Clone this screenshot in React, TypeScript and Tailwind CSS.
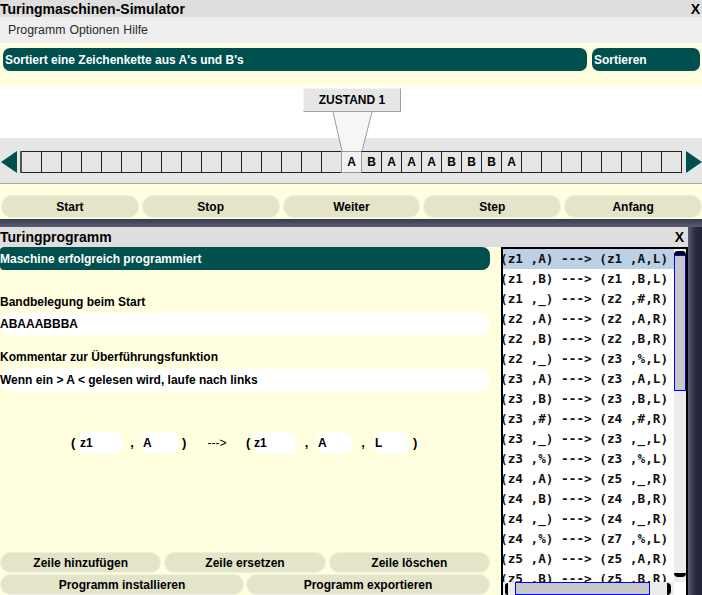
import React from "react";

const rows = [
  "(z1 ,A) ---> (z1 ,A,L)",
  "(z1 ,B) ---> (z1 ,B,L)",
  "(z1 ,_) ---> (z2 ,#,R)",
  "(z2 ,A) ---> (z2 ,A,R)",
  "(z2 ,B) ---> (z2 ,B,R)",
  "(z2 ,_) ---> (z3 ,%,L)",
  "(z3 ,A) ---> (z3 ,A,L)",
  "(z3 ,B) ---> (z3 ,B,L)",
  "(z3 ,#) ---> (z4 ,#,R)",
  "(z3 ,_) ---> (z3 ,_,L)",
  "(z3 ,%) ---> (z3 ,%,L)",
  "(z4 ,A) ---> (z5 ,_,R)",
  "(z4 ,B) ---> (z4 ,B,R)",
  "(z4 ,_) ---> (z4 ,_,R)",
  "(z4 ,%) ---> (z7 ,%,L)",
  "(z5 ,A) ---> (z5 ,A,R)",
  "(z5 ,B) ---> (z5 ,B,R)",
];

const tape: string[] = [
  ...Array(16).fill(""),
  "A", "B", "A", "A", "A", "B", "B", "B", "A",
  ...Array(8).fill(""),
];

function Btn({ children }: { children: React.ReactNode }) {
  return (
    <div className="h-full bg-[#e4e4c9] border border-[#efefdf] rounded-[11px] flex items-center justify-center text-[12px] font-bold text-black">
      {children}
    </div>
  );
}

function Field({ w, value }: { w: string; value: string }) {
  return (
    <div className={`${w} h-[22px] bg-white rounded-[10px] flex items-center pl-[2px] text-[12px] font-bold`}>
      {value}
    </div>
  );
}

export default function App() {
  return (
    <div className="relative w-[702px] h-[595px] overflow-hidden bg-white font-['Liberation_Sans',Arial,sans-serif] text-black flex flex-col">
      {/* title bar */}
      <div className="h-[17px] shrink-0 bg-[#dedede] flex items-center justify-between pr-[2px]">
        <span className="text-[14px] font-bold leading-none">Turingmaschinen-Simulator</span>
        <span className="text-[14px] font-bold leading-none">X</span>
      </div>
      {/* menu */}
      <div className="h-[26px] shrink-0 bg-[#eeeeee] flex items-center pl-[8px] text-[12.3px] text-[#2a2a2a] gap-[4px]">
        <span>Programm</span>
        <span>Optionen</span>
        <span>Hilfe</span>
      </div>
      {/* program name */}
      <div className="h-[43px] shrink-0 bg-[#ffffe0] flex gap-[5px] pt-[5px] pl-[3px] pr-[2px]">
        <div className="flex-1 h-[23px] bg-[#005050] rounded-[7px] text-white font-bold text-[12px] flex items-center pl-[2px]">
          Sortiert eine Zeichenkette aus A's und B's
        </div>
        <div className="w-[108px] h-[23px] bg-[#005050] rounded-[7px] text-white font-bold text-[12px] flex items-center pl-[2px]">
          Sortieren
        </div>
      </div>
      {/* state */}
      <div className="h-[52px] shrink-0 bg-white pt-[2px] pl-[303px]">
        <div className="w-[98px] h-[24px] bg-[#e6e6e6] border border-[#f4f4f4] border-r-[#a0a0a0] border-b-[#a0a0a0] flex items-center justify-center text-[12px] font-bold">
          ZUSTAND 1
        </div>
      </div>
      {/* tape */}
      <div className="h-[46px] shrink-0 bg-[#e6e6e6] border-b border-[#a8a8a8] flex items-start pt-[13px] pl-[1px]">
        <svg width="17" height="22" viewBox="0 0 17 22" className="shrink-0">
          <polygon points="16,0 16,22 0,11" fill="#005050" />
        </svg>
        <div className="ml-[2px] flex border-r border-[#222] border-l-2 border-l-[#555]">
          {tape.map((c, i) => (
            <div
              key={i}
              className={
                i === 16
                  ? "w-[20px] h-[22px] border-y border-y-[#9a9a9a] border-l border-l-[#9a9a9a] bg-[#f2f2f2] flex items-center justify-center text-[12px] font-bold"
                  : i === 17
                  ? "w-[20px] h-[22px] border-y border-[#222] border-l border-l-[#9a9a9a] flex items-center justify-center text-[12px] font-bold"
                  : i === 0
                  ? "w-[19px] h-[22px] border-y border-[#222] flex items-center justify-center text-[12px] font-bold"
                  : "w-[20px] h-[22px] border-y border-l border-[#222] flex items-center justify-center text-[12px] font-bold"
              }
            >
              {c}
            </div>
          ))}
        </div>
        <svg width="16" height="22" viewBox="0 0 16 22" className="shrink-0 ml-[4px]">
          <polygon points="0,0 0,22 16,11" fill="#005050" />
        </svg>
      </div>
      {/* pointer from state box to head */}
      <svg className="absolute left-[330px] top-[112px]" width="46" height="41" viewBox="0 0 46 41">
        <polygon points="3,0 42,0 32,39 12,39" fill="#f6f6f6" />
        <line x1="3" y1="0" x2="12" y2="39" stroke="#9a9a9a" strokeWidth="1" />
        <line x1="42" y1="0" x2="32" y2="39" stroke="#9a9a9a" strokeWidth="1" />
      </svg>
      {/* control buttons */}
      <div className="h-[35px] shrink-0 bg-[#ffffe0] pt-[11px] pl-[1px]">
        <div className="h-[23px] grid grid-cols-5 gap-[3px]">
          <Btn>Start</Btn>
          <Btn>Stop</Btn>
          <Btn>Weiter</Btn>
          <Btn>Step</Btn>
          <Btn>Anfang</Btn>
        </div>
      </div>
      {/* dark band */}
      <div className="h-[8px] shrink-0 bg-gradient-to-b from-[#3a3a52] to-[#5c5c72]" />
      {/* lower window */}
      <div className="flex-1 flex min-h-0">
        <div className="w-[688px] shrink-0 flex flex-col">
          <div className="h-[20px] shrink-0 bg-[#dedede] flex items-center justify-between pr-[4px]">
            <span className="text-[14px] font-bold leading-none">Turingprogramm</span>
            <span className="text-[14px] font-bold leading-none">X</span>
          </div>
          <div className="flex-1 min-h-0 bg-[#ffffe0] flex">
            {/* left column */}
            <div className="w-[490px] shrink-0 flex flex-col">
              <div className="h-[23px] shrink-0 bg-[#005050] rounded-r-[8px] rounded-l-[4px] text-white font-bold text-[12px] flex items-center">
                Maschine erfolgreich programmiert
              </div>
              <div className="mt-[25px] h-[14px] text-[12px] font-bold leading-[14px]">Bandbelegung beim Start</div>
              <div className="mt-[4px] h-[22px] bg-white rounded-[10px] flex items-center text-[12px] font-bold">ABAAABBBA</div>
              <div className="mt-[15px] h-[14px] text-[12px] font-bold leading-[14px]">Kommentar zur Überführungsfunktion</div>
              <div className="mt-[5px] h-[22px] bg-white rounded-[10px] flex items-center text-[12px] font-bold">
                Wenn ein &gt; A &lt; gelesen wird, laufe nach links
              </div>
              <div className="mt-[41px] h-[22px] flex items-center text-[13px] font-bold">
                <div className="w-[71px]" />
                <div className="w-[7px]">(</div>
                <Field w="w-[45px]" value="z1" />
                <div className="w-[18px] text-center">,</div>
                <Field w="w-[38px]" value="A" />
                <div className="w-[10px] pl-[3px]">)</div>
                <div className="w-[56px] text-center text-[12px] font-normal">---&gt;</div>
                <div className="w-[7px] pl-[1px]">(</div>
                <Field w="w-[45px]" value="z1" />
                <div className="w-[19px] text-center">,</div>
                <Field w="w-[37px]" value="A" />
                <div className="w-[20px] text-center">,</div>
                <Field w="w-[37px]" value="L" />
                <div className="w-[8px] pl-[3px]">)</div>
              </div>
              <div className="mt-auto flex flex-col gap-[1px]">
                <div className="h-[21px] grid grid-cols-3 gap-[3px]">
                  <Btn>Zeile hinzufügen</Btn>
                  <Btn>Zeile ersetzen</Btn>
                  <Btn>Zeile löschen</Btn>
                </div>
                <div className="h-[21px] grid grid-cols-2 gap-[2px]">
                  <Btn>Programm installieren</Btn>
                  <Btn>Programm exportieren</Btn>
                </div>
              </div>
            </div>
            {/* transition list */}
            <div className="ml-[11px] w-[187px] h-[348px] border-2 border-b-0 border-black bg-white flex flex-col overflow-hidden">
              <div className="h-[333px] flex">
                <div className="w-[171px] overflow-hidden bg-white">
                  {rows.map((r, i) => (
                    <div
                      key={i}
                      className={`h-[20px] flex items-center whitespace-pre font-['DejaVu_Sans_Mono',monospace] font-bold text-[12.7px] text-[#111] ml-[-3px] ${
                        i === 0 ? "bg-[#bcd0e6]" : ""
                      }`}
                    >
                      {r}
                    </div>
                  ))}
                </div>
                <div className="w-[12px] bg-[#ececec] flex flex-col pt-[2px]">
                  <div className="h-[4px] bg-black rounded-t-[5px]" />
                  <div className="h-[136px] bg-[#c8c8c8] border border-[#0000ff]" />
                  <div className="flex-1" />
                  <div className="h-[4px] bg-black rounded-b-[5px] mb-[5px]" />
                </div>
              </div>
              <div className="h-[13px] flex">
                <div className="w-[171px] bg-[#ececec] flex items-center pl-[2px]">
                  <div className="w-[3px] h-[12px] bg-black rounded-l-[4px]" />
                  <div className="ml-[7px] w-[135px] h-[13px] bg-[#c8c8c8] border border-[#0000ff]" />
                  <div className="ml-[17px] w-[4px] h-[12px] bg-black rounded-r-[4px]" />
                </div>
                <div className="w-[12px] bg-white" />
              </div>
            </div>
          </div>
        </div>
        <div className="flex-1 bg-gradient-to-r from-[#5a5a70] via-[#2a2a44] to-[#22223a]" />
      </div>
    </div>
  );
}
